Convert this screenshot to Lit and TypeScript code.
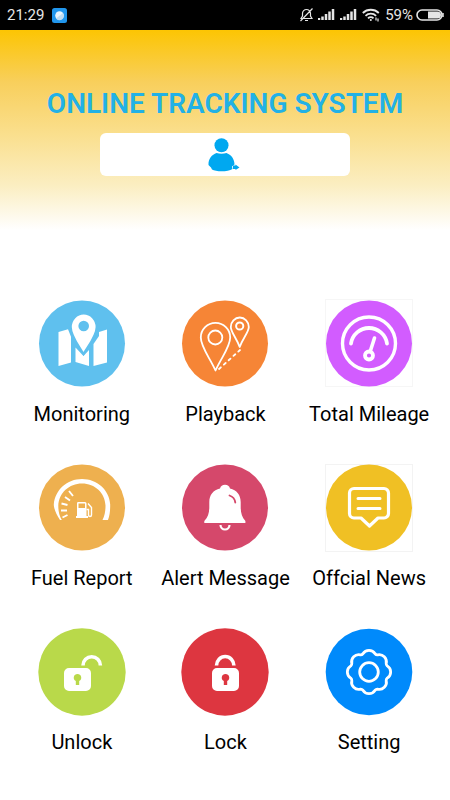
import { LitElement, html, svg, css, type SVGTemplateResult } from "lit";
import { customElement } from "lit/decorators.js";

interface Feature {
  label: string;
  art: SVGTemplateResult;
}

/* Scalloped outline of the settings gear: eight lobes joined by small rounded valleys. */
function gearPath(cx: number, cy: number, r: number, lobe: number, valley: number): string {
  const at = (deg: number) => {
    const a = (deg * Math.PI) / 180;
    return `${(cx + r * Math.cos(a)).toFixed(2)} ${(cy + r * Math.sin(a)).toFixed(2)}`;
  };
  let d = `M${at(-18.5)}`;
  for (let i = 0; i < 8; i++) {
    d += `A${lobe} ${lobe} 0 0 1 ${at(i * 45 + 18.5)}A${valley} ${valley} 0 0 0 ${at(i * 45 + 26.5)}`;
  }
  return d + "Z";
}

const padlockBody = svg`
  <path fill="#fff" fill-rule="evenodd" d="M31 40h17a5 5 0 0 1 5 5v13a5 5 0 0 1-5 5H31a5 5 0 0 1-5-5V45a5 5 0 0 1 5-5Z
    M39.500 46a3.700 3.700 0 0 0-1.700 7v4h3.400v-4a3.700 3.700 0 0 0-1.700-7Z"/>`;

const features: Feature[] = [
  {
    label: "Monitoring",
    art: svg`
      <circle cx="44" cy="43.500" r="43" fill="#5fc0ee"/>
      <path fill="#fff" d="M20.500 32 30 29.300l3 7.500v25.700l-12.500 3.500Z M37.500 47.500 45.500 56l5.500-6v16l-13.500-4Z M55.500 44 61 36v-4l8-2.500V62.500L55.500 66Z"/>
      <path fill="#fff" stroke="#5fc0ee" stroke-width="2" d="M45.500 54C41 46 32.800 36 32.800 27a12.900 13.500 0 0 1 25.800 0C58.600 36 50 46 45.500 54Z"/>
      <circle cx="45.700" cy="26" r="5.300" fill="#5fc0ee"/>`,
  },
  {
    label: "Playback",
    art: svg`
      <circle cx="44" cy="43.500" r="43" fill="#f68536"/>
      <g fill="none" stroke="#fff" stroke-width="1.800" stroke-linejoin="round" stroke-linecap="round">
        <path d="M34.500 70.500C29 58 19.800 47 19.800 37.500a14.700 14.700 0 0 1 29.400 0C49.200 47 40 58 34.500 70.500Z"/>
        <circle cx="34.300" cy="37.500" r="7"/>
        <path d="M58.700 47C55.500 38 49.800 32 49.800 27a9 9.500 0 0 1 18 0C67.800 32 62 38 58.700 47Z"/>
        <circle cx="58.700" cy="26" r="3.600" stroke-width="2"/>
        <path d="M38 69 59 50" stroke-dasharray="2.500 4"/>
      </g>`,
  },
  {
    label: "Total Mileage",
    art: svg`
      <rect x="0.500" y="-0.500" width="87" height="87" fill="none" stroke="#f6f6f6"/>
      <circle cx="44" cy="43.500" r="43" fill="#d25cff"/>
      <g fill="none" stroke="#fff" stroke-linecap="round">
        <circle cx="44" cy="43.500" r="26.500" stroke-width="3.400"/>
        <path d="M26 43.500a18.200 18.200 0 0 1 36 0" stroke-width="3.800"/>
        <circle cx="44" cy="55.500" r="4" stroke-width="3.800"/>
        <path d="M45.500 50.500 49.500 38" stroke-width="3.600"/>
      </g>`,
  },
  {
    label: "Fuel Report",
    art: svg`
      <circle cx="44" cy="43.500" r="43" fill="#eeb04f"/>
      <path fill="#fff" d="M22 56C18 50 15.800 44 15.800 40.500 17 26 29 15 44 15s27.500 11 28.200 25.500C72.200 45 72 51 70 56H64.500c2.500-5 3-10 3-14.500C67 29 57 19.500 44 19.500S21 29 20.300 41.500C20.300 47 21 51 23.800 56Z"/>
      <g stroke="#fff" stroke-width="1.900">
        <path d="m31 27 4 5M27 33l5 3.500M23.500 39.500l6 1.500M23 46.500h6M24.500 53.500l5-2.500"/>
      </g>
      <path fill="#fff" fill-rule="evenodd" d="M39.500 38H47a1.500 1.500 0 0 1 1.500 1.500V52H50v2H38v-2h1V39.500Z M40.500 39.500V44H47v-4.500Z"/>
      <path fill="none" stroke="#fff" stroke-width="1.400" d="M48.500 45.500h2v5.500a1.500 1.500 0 0 0 3 0V43.500L50 39.500"/>`,
  },
  {
    label: "Alert Message",
    art: svg`
      <circle cx="44" cy="43.500" r="43" fill="#d5486b"/>
      <path fill="#fff" d="M23.300 59v-2C27 53 28.300 49 28.300 43V38c0-7 4-12 10.700-13.500a5.200 5.200 0 0 1 10 0C55.700 26 59.700 31 59.700 38v5c0 6 1.300 10 4.700 14v2Z"/>
      <path d="M48.500 31.500c3 1 5.300 3.500 5.800 7" fill="none" stroke="#d5486b" stroke-width="1.800" stroke-linecap="round"/>
      <path d="M39.500 61a4.500 4.500 0 0 0 9 0" fill="none" stroke="#fff" stroke-width="2.200"/>`,
  },
  {
    label: "Offcial News",
    art: svg`
      <rect x="0.500" y="0.500" width="87" height="87" fill="none" stroke="#f3f3f3"/>
      <circle cx="44" cy="43.500" r="43" fill="#f0c024"/>
      <g fill="none" stroke="#fff" stroke-width="3" stroke-linejoin="round" stroke-linecap="round">
        <path stroke-width="3.200" d="M29 24.500h30a4.500 4.500 0 0 1 4.500 4.500v20.500a4.500 4.500 0 0 1-4.500 4.500h-6L44.500 62 36 54h-7a4.500 4.500 0 0 1-4.500-4.500V29a4.500 4.500 0 0 1 4.500-4.500Z"/>
        <path d="M33 34.500h22M33 44.500h22"/>
      </g>`,
  },
  {
    label: "Unlock",
    art: svg`
      <circle cx="44" cy="44" r="43.700" fill="#b9d94a"/>
      ${padlockBody}
      <path d="M45 37.500a8.700 8.700 0 1 1 17.400 0" fill="none" stroke="#fff" stroke-width="3.600"/>`,
  },
  {
    label: "Lock",
    art: svg`
      <circle cx="44" cy="44" r="43.700" fill="#dd3640"/>
      <g transform="translate(5 0)">${padlockBody}</g>
      <path d="M35.500 37.500a8.700 9 0 1 1 17.400 0" fill="none" stroke="#fff" stroke-width="3.600"/>`,
  },
  {
    label: "Setting",
    art: svg`
      <circle cx="44" cy="44" r="43.300" fill="#008afb"/>
      <g fill="none" stroke="#fff" stroke-width="2.800" stroke-linejoin="round">
        <path d=${gearPath(44, 44, 19.2, 7.1, 3)}/>
        <circle cx="44" cy="44" r="9.300"/>
      </g>`,
  },
];

const signal = svg`<path d="M1 11V9M4.500 11V7.500M8 11V5M11.500 11V2.500M15 11V0" stroke="#e6e6e6" stroke-width="2.500"/>`;

@customElement("status-bar")
export class StatusBar extends LitElement {
  static styles = css`
    :host {
      display: flex;
      align-items: center;
      justify-content: space-between;
      height: 30px;
      padding: 0 6px 0 7px;
      background: #000;
      color: #e6e6e6;
      font: 15px/30px Roboto, sans-serif;
    }
    .group { display: flex; align-items: center; }
    .left { gap: 8px; }
    .right { gap: 5px; }
    .battery { display: flex; align-items: center; gap: 3px; }
    svg { display: block; flex: none; }
  `;

  render() {
    return html`
      <div class="group left">
        <span>21:29</span>
        <svg width="15" height="15" viewBox="0 0 15 15" aria-hidden="true">
          <rect width="15" height="15" rx="2.500" fill="#2196ec"/>
          <circle cx="7.500" cy="7.500" r="4.300" fill="#e9f4fc"/>
          <path d="M4 10.500 11 5a4.300 4.300 0 0 1-7 5.500Z" fill="#bfdcf2"/>
        </svg>
      </div>
      <div class="group right">
        <svg width="13" height="14" viewBox="0 0 13 14" fill="none" stroke="#e6e6e6" stroke-width="1.200" aria-hidden="true">
          <path d="M1 10.500h11L10.500 8V5.500a4 4 0 0 0-8 0V8ZM5 12.500h3M12.500.5.5 13"/>
        </svg>
        <svg width="17" height="12" viewBox="0 0 17 12" aria-hidden="true">${signal}</svg>
        <svg width="17" height="12" viewBox="0 0 17 12" aria-hidden="true">${signal}</svg>
        <svg width="18" height="14" viewBox="0 0 18 14" fill="none" stroke="#e6e6e6" stroke-width="1.800" aria-hidden="true">
          <path d="M.8 5a11.500 11.500 0 0 1 16 0M3.500 7.800a7.500 7.500 0 0 1 10.600 0M6 10.300a4 4 0 0 1 5.500 0"/>
          <circle cx="8.800" cy="12" r="1" fill="#e6e6e6" stroke="none"/>
          <path d="M14 9.500v3M16 10.500v3" stroke-width="1.200"/>
        </svg>
        <span class="battery">
          <span>59%</span>
          <svg width="28" height="12" viewBox="0 0 28 12" aria-hidden="true">
            <rect x="1" y="1" width="25" height="10" rx="5" fill="none" stroke="#e6e6e6" stroke-width="1.600"/>
            <path d="M12 2.500h9.500a3.500 3.500 0 0 1 0 7H12Z" fill="#e6e6e6"/>
            <path d="M27 4v4" stroke="#e6e6e6" stroke-width="1.500"/>
          </svg>
        </span>
      </div>
    `;
  }
}

@customElement("app-root")
export class AppRoot extends LitElement {
  static styles = css`
    :host {
      display: block;
      min-height: 100vh;
      background: #fff;
      color: #000;
      font-family: Roboto, sans-serif;
    }
    .banner {
      display: flex;
      flex-direction: column;
      align-items: center;
      gap: 13px;
      padding: 58px 16px 54px;
      background: linear-gradient(#fcc503, #f8cf5c 26%, #fadf8d 52%, #fbeec2 78%, #fff);
    }
    .title {
      margin: 0;
      color: #22b1e6;
      font-size: 28px;
      line-height: 32px;
      font-weight: 600;
      text-align: center;
    }
    .account {
      display: flex;
      align-items: center;
      justify-content: center;
      width: 60%;
      height: 43px;
      padding: 0;
      border: 0;
      border-radius: 6px;
      background: #fff;
    }
    .features {
      display: grid;
      grid-template-columns: repeat(3, 1fr);
      row-gap: 38px;
      padding: 70px 9px 40px 10px;
    }
    .feature {
      display: flex;
      flex-direction: column;
      align-items: center;
      gap: 14px;
      padding: 0;
      border: 0;
      background: none;
      color: inherit;
      font: 20px/24px Roboto, sans-serif;
      white-space: nowrap;
      cursor: pointer;
    }
    svg { display: block; overflow: visible; }
  `;

  render() {
    return html`
      <status-bar></status-bar>
      <header class="banner">
        <h1 class="title">ONLINE TRACKING SYSTEM</h1>
        <button class="account" type="button" aria-label="Account">
          <svg width="34" height="34" viewBox="0 0 34 34" fill="#00a8f0" aria-hidden="true">
            <circle cx="13.500" cy="7.300" r="7"/>
            <path d="M8.500 15q5 1.500 10 0C24 17 26.500 22 26.500 26.500L24 28.500 24.500 31C20 34 8 34 4 31.500L3 29.500.500 27C0 21 4 16.500 8.500 15Z"/>
            <path d="M25 27.500h2.500V26.500L31.500 29.500 27.500 32V31H25Z"/>
          </svg>
        </button>
      </header>
      <main class="features">
        ${features.map(
          (f) => html`
            <button class="feature" type="button">
              <svg width="88" height="88" viewBox="0 0 88 88" aria-hidden="true">${f.art}</svg>
              <span>${f.label}</span>
            </button>
          `,
        )}
      </main>
    `;
  }
}
